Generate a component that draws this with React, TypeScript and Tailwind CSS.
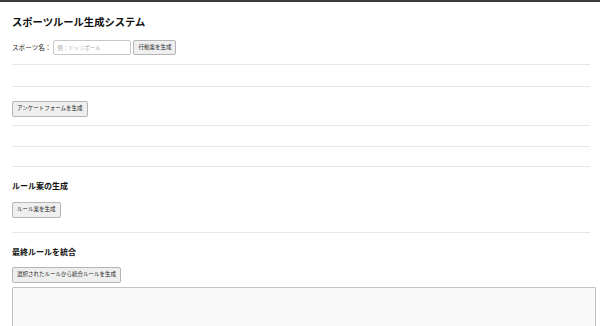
const jp = { fontFamily: '"Noto Sans CJK JP", "Noto Sans", sans-serif' };

function SmallButton({ children, tall = true }: { children: React.ReactNode; tall?: boolean }) {
  return (
    <button
      type="button"
      className={
        (tall ? "h-[16px] " : "h-[15px] ") +
        "flex items-center rounded-[2px] border border-[#b5b5b5] bg-[#efefef] px-[4px] text-[5.5px] leading-none text-[#222]"
      }
    >
      {children}
    </button>
  );
}

function Rule() {
  return <hr className="border-0 border-t border-[#e6e6e6]" />;
}

export default function App() {
  return (
    <div className="min-h-[326px] bg-white text-[#111]" style={jp}>
      <div className="h-[2px] bg-[#3b3b3b]" />
      <div className="pl-[12px] pr-[10px]">
        <h1 className="mt-[13px] text-[10.3px] font-bold leading-[14px]">
          スポーツルール生成システム
        </h1>

        <div className="mt-[11px] flex items-center gap-[2px]">
          <label className="text-[6.6px] text-[#222]">スポーツ名：</label>
          <input
            type="text"
            placeholder="例：ドッジボール"
            className="h-[15px] w-[78px] rounded-[2px] border border-[#c8c8c8] bg-white px-[3px] text-[5.4px] placeholder:text-[#aaa]"
          />
          <SmallButton tall={false}>行動案を生成</SmallButton>
        </div>

        <div className="mt-[9px]">
          <Rule />
        </div>
        <div className="mt-[21px]">
          <Rule />
        </div>

        <div className="mt-[14px] flex">
          <SmallButton>アンケートフォームを生成</SmallButton>
        </div>

        <div className="mt-[8px]">
          <Rule />
        </div>
        <div className="mt-[20px]">
          <Rule />
        </div>
        <div className="mt-[19px]">
          <Rule />
        </div>

        <h3 className="mt-[13px] text-[8px] font-bold leading-[12px]">ルール案の生成</h3>
        <div className="mt-[10px] flex">
          <SmallButton>ルール案を生成</SmallButton>
        </div>

        <div className="mt-[14px]">
          <Rule />
        </div>

        <h3 className="mt-[13px] text-[8px] font-bold leading-[12px]">最終ルールを統合</h3>
        <div className="mt-[9px] flex">
          <SmallButton>選択されたルールから統合ルールを生成</SmallButton>
        </div>

        <textarea className="mt-[4px] block h-[60px] w-[584px] resize-none rounded-[1px] border border-[#c4c4c4] bg-[#f9f9f9]" />
      </div>
    </div>
  );
}
